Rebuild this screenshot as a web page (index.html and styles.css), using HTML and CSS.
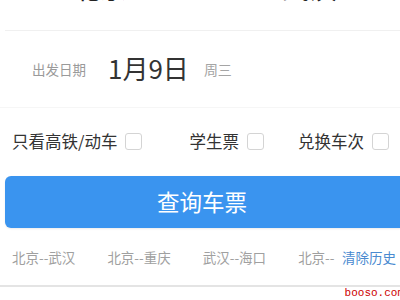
FILE: index.html
```html
<!DOCTYPE html>
<html lang="zh-CN">
<head>
    <meta charset="UTF-8">
    <title>车票查询</title>
    <link rel="stylesheet" href="styles.css">
</head>
<body>
    <div class="page">
        <div class="route">
            <span class="city">北京</span>
            <span class="city">武汉</span>
        </div>

        <div class="date-row">
            <span class="date-label">出发日期</span>
            <span class="date-value">1月9日</span>
            <span class="date-week">周三</span>
        </div>

        <div class="options">
            <label class="option">只看高铁/动车<span class="check"></span></label>
            <label class="option student">学生票<span class="check"></span></label>
            <label class="option swap">兑换车次<span class="check"></span></label>
        </div>

        <button class="search">查询车票</button>

        <div class="history">
            <div class="history-list">
                <span>北京--武汉</span>
                <span>北京--重庆</span>
                <span>武汉--海口</span>
                <span>北京--</span>
            </div>
            <span class="clear">清除历史</span>
        </div>

        <div class="mark">booso.com</div>
    </div>
</body>
</html>
```

FILE: styles.css
```css
/* General */
body {
    margin: 0;
    background-color: #ffffff;
    font-family: "Noto Sans CJK SC", "Noto Sans", sans-serif;
    overflow: hidden;
}

.page {
    position: relative;
    width: 400px;
    height: 300px;
    overflow: hidden;
}

/* Route (scrolled off the top) */
.route {
    height: 30px;
    margin-left: 5px;
    border-bottom: 1px solid #f0f0f0;
    overflow: hidden;
}

.route .city {
    display: inline-block;
    font-size: 27px;
    line-height: 30px;
    color: #222;
    margin-top: -27px;
    vertical-align: top;
}

.route .city:first-child {
    margin-left: 68px;
}

.route .city:last-child {
    margin-left: 152px;
}

/* Date */
.date-row {
    display: flex;
    align-items: center;
    height: 76px;
    padding-left: 32px;
    border-bottom: 1px solid #f6f6f6;
}

.date-label {
    font-size: 13.5px;
    color: #9a9a9a;
}

.date-value {
    font-size: 26px;
    color: #333;
    margin-left: 22px;
    margin-bottom: 4px;
}

.date-week {
    font-size: 14px;
    color: #a5a5a5;
    margin-left: 15px;
}

/* Options */
.options {
    display: flex;
    align-items: center;
    height: 66px;
    padding-left: 12px;
}

.option {
    display: flex;
    align-items: center;
    font-size: 16.5px;
    color: #333;
}

.option.student {
    margin-left: 47px;
}

.option.swap {
    margin-left: 34px;
}

.check {
    width: 15px;
    height: 15px;
    margin-left: 8px;
    border: 1px solid #d4d4d4;
    border-radius: 3px;
}

/* Search Button */
.search {
    display: block;
    width: 400px;
    height: 52px;
    margin: 2px 0 0 5px;
    border: none;
    border-radius: 6px;
    background-color: #3a94ef;
    color: #ffffff;
    font-family: inherit;
    font-size: 22.5px;
    padding: 0 0 2px 0;
    text-indent: -6px;
    box-shadow: 0 1px 2px rgba(0, 0, 0, 0.08);
}

/* History */
.history {
    display: flex;
    align-items: center;
    height: 57px;
    padding: 0 4px 0 12px;
    border-bottom: 2px solid #e4e4e4;
}

.history-list {
    display: flex;
    gap: 32px;
    white-space: nowrap;
    font-size: 13.5px;
    color: #a0a0a0;
}

.clear {
    margin-left: auto;
    font-size: 13.5px;
    color: #4a8ad0;
    white-space: nowrap;
}

/* Watermark */
.mark {
    position: absolute;
    right: -4px;
    bottom: 1px;
    font-family: "Liberation Mono", monospace;
    font-size: 11px;
    color: #cc0000;
}
```
